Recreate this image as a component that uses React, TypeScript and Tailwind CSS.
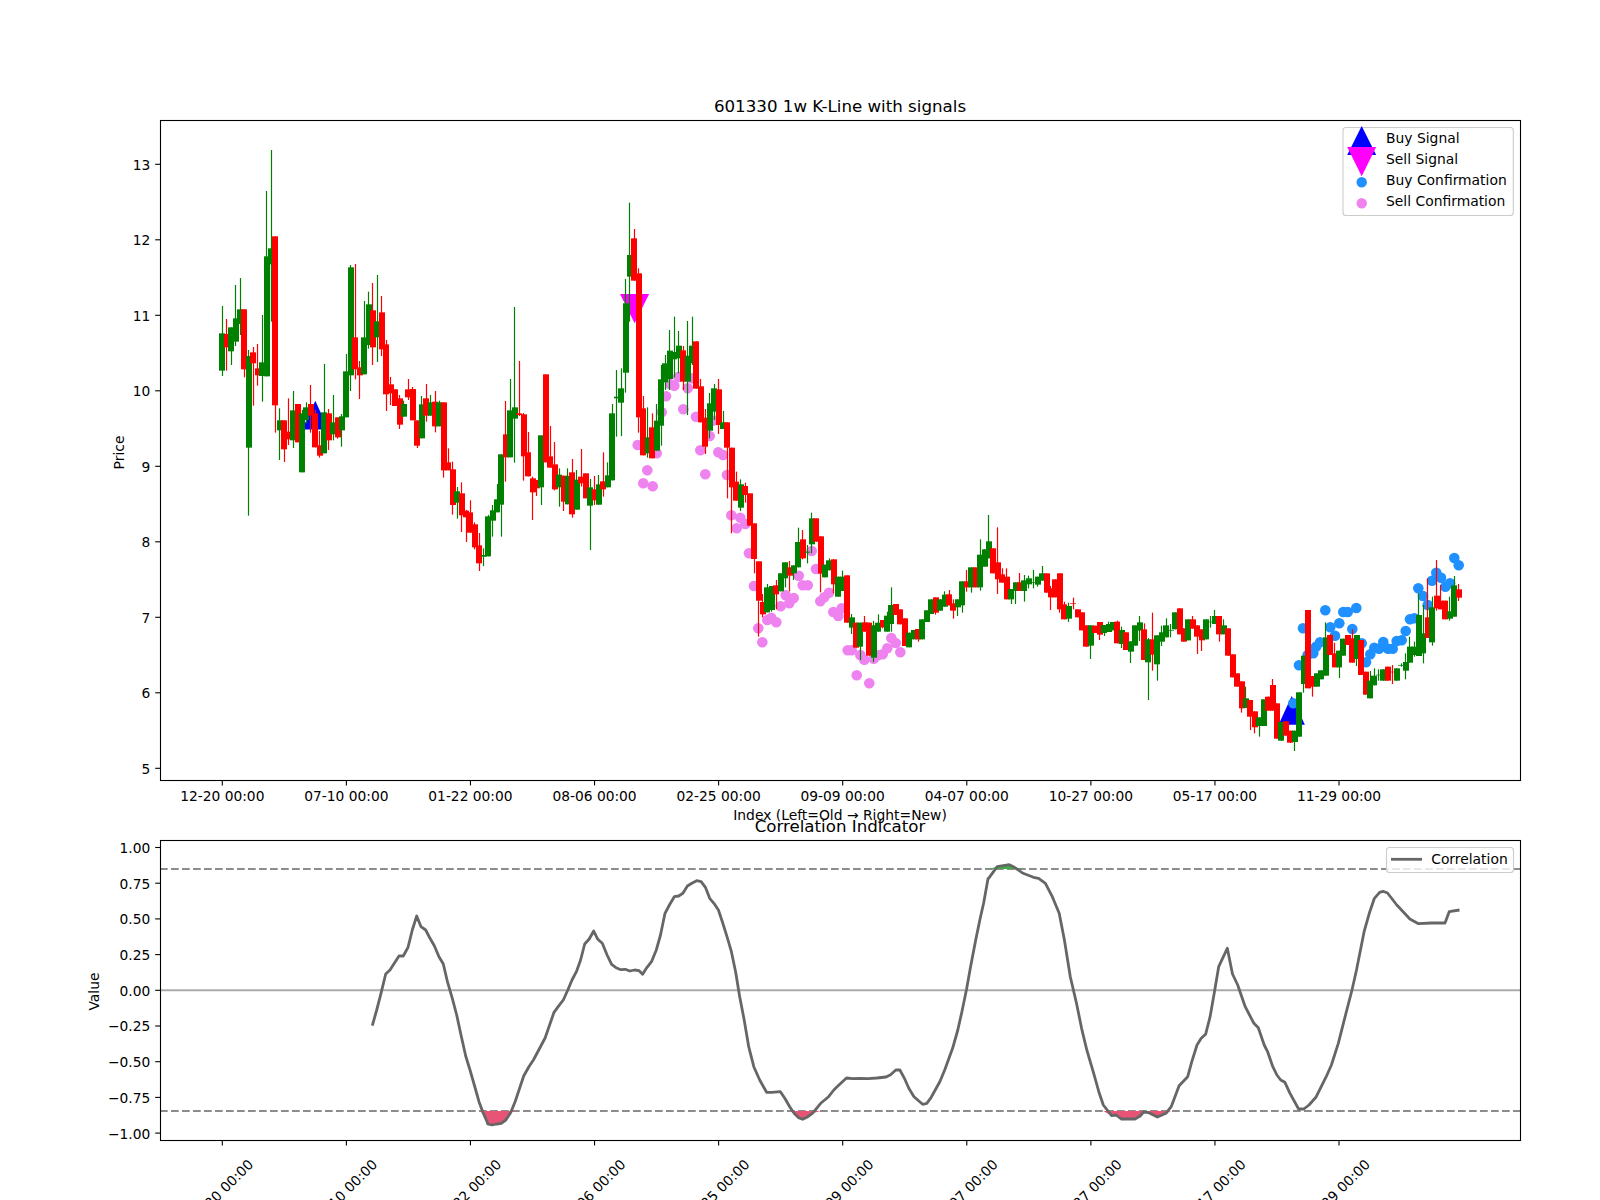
import React from "react";

type Candle = { up: boolean; top: number; bottom: number; high: number; low: number };
type Pt = [number, number];

// rows are "colour bodyTop bodyBottom wickTop wickBottom", read off 3x crops starting at baseY
function seg(baseY: number, rows: string): Candle[] {
  return rows
    .trim()
    .split(/\s*,\s*/)
    .map((row) => {
      const [c, a, b, d, e] = row.trim().split(/\s+/);
      return {
        up: c === "g",
        top: baseY + Number(a) / 3,
        bottom: baseY + Number(b) / 3,
        high: baseY + Number(d) / 3,
        low: baseY + Number(e) / 3,
      };
    });
}

const candles: Candle[] = [
  ...seg(100, `g 700 812 618 828, r 702 742 657 812, g 682 754 682 795, g 655 725 555 738, g 628 672 534 705,
    r 628 808 628 832, g 768 1043 750 1247, r 757 790 741 917, r 805 826 732 857, g 787 828 645 905,
    g 469 829 273 829, g 445 493 150 665, r 409 916 409 998`),
  ...seg(380, `g 121 151 85 240, r 121 208 121 246, r 155 178 55 195, g 91 181 33 204, r 72 187 72 187,
    g 100 277 90 277, g 82 120 67 130, r 72 107 15 158, r 100 202 90 202, r 196 227 153 233,
    g 97 220 -48 220, r 100 181 87 210, g 127 163 45 181, r 112 172 112 176, g 109 151 102 200,
    g -26 112 -78 112, g -338 -14 -345 33, r -128 -32 -348 -2, r -38 -14 -57 57, g -128 -17 -237 -17,
    g -227 -105 -265 -94, r -209 -98 -291 -45, g -176 -128 -315 -54, r -203 -92 -252 -72, r -107 43 -120 93,
    r 13 40 -9 75, r 28 78 28 78, r 55 134 45 147, g 72 110 62 110, r 28 52 -3 60,
    r 27 121 21 121, r 121 197 121 204, g 73 175 48 175, r 55 107 12 125, g 67 107 45 107,
    r 65 139 33 157, g 67 139 62 139, r 67 271 67 293, r 247 271 205 271, r 268 375 245 404,
    g 334 368 321 416, r 340 406 307 456, r 392 412 390 486, r 397 458 361 458, r 433 502 427 508,
    r 496 550 459 573, g 525 530 505 558, g 409 529 405 529, g 391 422 375 470, g 358 397 312 397,
    g 223 374 223 470, r 163 232 63 305, g 91 232 -3 232, g 82 116 -219 248, r 100 105 -57 108,
    r 103 229 99 302, r 217 289 156 289, r 295 337 290 420, r 300 325 300 348, g 166 322 166 375,
    r -17 247 -17 247, r 229 263 138 263, r 253 328 186 331, g 284 322 265 380, r 287 365 287 393,
    g 288 373 265 373`),
  ...seg(430, `r 127 253 87 263, g 149 239 120 239, r 140 160 57 170, r 130 205 130 205, g 172 227 147 360,
    r 178 211 138 225, g 163 224 135 224, r 154 178 67 200, g 136 172 97 172, g -50 151 -78 151`),
  ...seg(180, `g 650 655 570 770, g 625 668 565 768, g 370 578 297 638, g 225 290 68 425, r 175 302 147 302,
    r 280 712 265 758, r 685 826 648 826, g 772 820 682 833, r 742 835 700 835, g 722 812 672 812,
    g 598 737 555 797, g 550 607 525 630, g 512 597 450 630, g 516 538 410 592, g 497 535 453 580,
    r 511 605 498 630, g 527 605 423 705, g 497 550 410 555, r 484 626 484 626, r 619 727 597 727,
    r 713 800 687 822, g 670 752 639 775, g 625 695 612 720, r 628 735 597 762, g 727 747 693 747,
    r 727 803 727 955`),
  ...seg(430, `r 53 172 53 310, r 155 212 125 212, g 163 233 148 243, r 168 195 158 218, r 190 287 190 287,
    r 280 387 280 430`),
  ...seg(480, `r 244 362 244 470, r 366 403 342 412, g 322 397 312 397, g 318 390 318 395, r 316 343 300 388,
    g 280 334 280 334, g 247 295 247 322, r 262 287 243 334, g 256 280 256 300, g 186 262 143 262,
    r 178 235 150 238, g 215 218 195 250, g 115 193 98 220, r 115 185 115 185, r 169 281 169 337,
    g 254 292 254 292, g 241 271 235 271, r 238 313 238 340, g 290 350 290 350, g 290 333 272 333,
    r 286 428 286 428, g 412 443 402 462, r 428 503 428 503, g 428 500 428 540, r 427 455 408 455,
    r 428 527 428 527, g 436 533 423 546, g 428 455 403 455, r 420 442 420 445, g 407 455 395 455,
    g 375 432 322 455, r 372 405 372 405, r 388 433 388 433, r 415 498 415 498, g 458 502 458 502,
    g 450 478 450 478, r 447 478 447 485, g 418 478 418 478, g 391 426 391 426, g 358 402 358 402,
    r 352 398 352 404, g 358 392 358 392, g 344 380 334 380, r 343 376 330 376, r 370 392 358 416,
    g 358 382 358 408, g 304 376 304 398, r 304 322 270 335, g 262 322 262 338, r 262 322 262 322,
    g 224 322 178 332, g 208 260 208 260, g 184 235 105 235, r 205 280 205 280, r 247 298 142 342,
    r 283 308 265 308, r 290 358 265 358, g 327 358 327 372, g 307 333 307 372, r 307 333 279 333`),
  ...seg(560, `g 61 93 45 125, g 55 73 47 85, g 66 68 30 85, g 50 74 50 80, g 40 62 18 62,
    r 40 98 40 98, r 85 112 78 150, r 58 112 58 112, r 40 148 40 158, r 133 178 125 178,
    g 138 176 128 186, r 130 132 113 148, r 148 172 148 172, r 157 211 157 211, r 196 260 196 260,
    g 196 257 196 297, r 197 219 197 219, r 186 224 186 240, g 195 219 195 228, g 192 216 185 216,
    g 186 211 186 211, r 185 250 182 250, g 210 252 200 264, r 217 270 217 270, g 244 275 244 309,
    g 196 257 196 257, g 187 212 168 243, r 208 300 190 300, g 238 307 234 420, r 238 284 158 332,
    g 226 313 226 362, g 217 245 197 258, g 196 232 175 232, g 210 212 192 232, g 157 208 157 208,
    r 145 223 145 223, r 205 245 205 245, g 178 241 178 241, r 178 206 168 206, r 196 230 196 282,
    r 208 241 208 273, g 178 238 178 238, g 185 187 168 203, g 168 192 150 192, r 168 223 168 245,
    g 196 223 178 223, r 205 287 205 287, r 283 352 283 352, r 340 380 340 380`),
  ...seg(540, `r 424 505 424 518, g 475 504 440 504, r 480 530 480 570, r 514 562 514 580, g 532 558 532 590,
    g 478 558 478 558, r 470 512 470 512, r 435 512 417 512, r 490 596 490 596, g 546 602 546 602,
    r 544 587 544 587, r 572 608 572 608, g 572 606 572 633, g 457 590 457 590, g 347 432 347 458,
    r 210 445 210 445, r 408 440 408 470, g 400 440 400 440, g 391 418 391 418, g 292 407 247 407,
    r 285 345 282 345, r 340 382 308 382, g 332 382 332 414, g 296 347 296 347, r 285 315 285 315,
    r 295 368 268 368, g 285 357 285 378, r 300 405 300 405, r 395 464 395 464, g 422 475 393 475,
    g 407 436 385 436, g 404 406 388 422, g 388 422 388 422, r 380 422 380 422, r 395 397 375 432,
    g 385 422 385 422, g 375 377 370 380, g 366 392 340 418, g 320 368 290 368, g 320 345 305 350,
    g 225 348 160 348, g 280 340 195 370, r 232 294 115 294, g 202 307 170 317, r 167 205 60 212,
    r 182 208 135 208, r 182 238 182 238, g 214 236 170 242, g 136 230 108 230, r 148 173 132 183`),
];

const TICK0 = 222.3;
const CANDLE_STEP = 4.4315;
const TICK_STEP = 124.08;

const sellDots: Pt[] = [
  [637.7, 445], [656.7, 453.3], [647.3, 470.3], [643.3, 483.3], [652.7, 486.3], [666, 396.3], [661.7, 412.3],
  [674.3, 385.7], [670, 384], [678.3, 377], [687.7, 388.3], [691.7, 378.3], [683.3, 409.3], [696, 416.7],
  [713, 420.7], [709.7, 436], [700.3, 450.3], [718.3, 452.3], [723, 455], [705.3, 474.3], [727, 475],
  [731.3, 515.3], [740.3, 517.7], [745.3, 524], [736.7, 528.3], [749, 553.3], [754, 586], [758.3, 628.3],
  [762.3, 642.3], [767.3, 620], [771.3, 617.7], [776.3, 622.3], [780.7, 606.3], [785.7, 595.3], [789.3, 603.3],
  [793.7, 598], [798.7, 575.7], [802.7, 585.3], [807.7, 585.3], [811.7, 551], [816, 569], [820.3, 601.3],
  [824.3, 597.3], [829, 592.7], [833.3, 612], [838.3, 616], [841.7, 608.3], [847.7, 650.3], [851.7, 650.3],
  [856.7, 675.3], [860.3, 655], [864.3, 659.7], [869.3, 683.3], [873.7, 658.7], [878, 655.3], [882.7, 654.3],
  [887.3, 648.3], [891.3, 638], [895.7, 643], [900.3, 652.3],
];

const buyDots: Pt[] = [
  [1293.3, 703.3], [1299, 665.3], [1303, 628.3], [1307.7, 655], [1313.3, 653.3], [1316, 646.7], [1320, 642.3],
  [1325.3, 610.3], [1330.3, 627.3], [1335, 635.7], [1339.3, 623.3], [1343.3, 612], [1347.7, 612], [1352.3, 629],
  [1356.3, 608], [1361.7, 643.3], [1366, 662.3], [1370.3, 654.3], [1374.3, 647.7], [1379, 648.7], [1383.3, 642],
  [1388, 648.7], [1392.7, 648.7], [1396.7, 641], [1401.7, 640.3], [1405.7, 631], [1410, 619.3], [1414.3, 618.3],
  [1418.3, 588.3], [1423, 596], [1427.7, 605], [1432, 580.7], [1436.3, 572.7], [1441, 577.7], [1445.3, 586.7],
  [1450, 583.3], [1454.3, 558], [1458.7, 565.3],
];

function scale(x0: number, y0: number, sx: number, raw: number[][]): Pt[] {
  return raw.map(([x, y]) => [x0 + x / sx, y0 + y / 3] as Pt);
}

const corr: Pt[] = [
  ...scale(0, 760, 3, [
    [1117, 797], [1130, 750], [1143, 700], [1157, 642], [1170, 630], [1183, 610], [1197, 588], [1210, 588], [1224, 562],
    [1237, 510], [1250, 468], [1263, 500], [1277, 510], [1290, 535], [1303, 557], [1317, 590], [1330, 612], [1343, 668],
    [1357, 715], [1370, 765], [1383, 825], [1397, 888], [1410, 930], [1423, 975], [1437, 1025], [1450, 1060], [1463, 1090],
  ]),
  ...scale(460, 840, 2.903, [
    [80, 852], [93, 855], [107, 852], [120, 850], [133, 840], [147, 818], [160, 785], [173, 745], [185, 708], [200, 680],
    [213, 660], [227, 633], [247, 594], [260, 555], [273, 517], [287, 497], [300, 480], [313, 450], [325, 420], [338, 395],
    [350, 360], [362, 312], [375, 297], [388, 273], [400, 298], [413, 310], [427, 345], [440, 373], [453, 383], [467, 389],
    [480, 388], [493, 393], [507, 390], [520, 392], [530, 403], [543, 382], [556, 365], [570, 330], [582, 285], [595, 220],
    [608, 195], [622, 170], [635, 168], [647, 160], [660, 138], [673, 130], [687, 122], [700, 125], [713, 143], [725, 175],
    [737, 190], [750, 210], [762, 247], [775, 290], [788, 335], [800, 395], [812, 470], [825, 540], [838, 620], [853, 680],
    [870, 720], [890, 757], [905, 757], [930, 755], [943, 775], [957, 800], [970, 820], [983, 833], [995, 838], [1010, 830],
    [1023, 820], [1047, 790], [1070, 770], [1085, 750], [1100, 735], [1122, 714], [1140, 716], [1160, 715], [1185, 716],
    [1210, 714], [1237, 711], [1250, 704], [1265, 690], [1277, 690], [1290, 715], [1303, 745], [1318, 770], [1343, 793],
    [1355, 790], [1368, 772], [1393, 725], [1407, 690], [1430, 625], [1445, 570], [1457, 515], [1470, 450], [1483, 375],
    [1497, 300], [1510, 235], [1520, 190], [1533, 115],
  ]),
  ...scale(980, 820, 2.903, [
    [25, 175], [50, 140], [85, 134], [100, 142], [125, 160], [155, 172], [170, 175], [190, 190], [210, 230], [230, 280],
    [245, 360], [262, 470], [280, 550], [295, 625], [310, 690], [330, 760], [345, 815], [358, 855], [382, 887], [395, 885],
    [410, 897], [450, 897], [465, 888], [475, 876], [490, 878], [515, 891], [540, 880], [555, 860], [578, 797], [603, 770],
    [615, 725], [630, 675], [642, 655], [655, 643], [668, 590], [680, 520], [693, 440], [718, 385], [733, 462], [748, 495],
    [770, 560], [795, 610], [808, 623], [825, 675], [835, 695], [850, 740], [862, 765], [873, 780], [885, 787], [900, 820],
    [925, 867], [940, 867], [955, 855], [975, 832], [1005, 770], [1020, 735], [1040, 670], [1060, 590], [1080, 510],
    [1093, 450], [1115, 335], [1130, 280], [1145, 235], [1160, 217], [1170, 214], [1183, 219], [1210, 255], [1248, 297],
    [1273, 311], [1310, 309], [1350, 309], [1362, 275], [1392, 270],
  ]),
];

const toPoints = (pts: Pt[]) => pts.map(([x, y]) => `${x.toFixed(1)},${y.toFixed(1)}`).join(" ");

const priceTicks = [5, 6, 7, 8, 9, 10, 11, 12, 13];
const corrTicks = ["1.00", "0.75", "0.50", "0.25", "0.00", "−0.25", "−0.50", "−0.75", "−1.00"];
const dates = ["12-20", "07-10", "01-22", "08-06", "02-25", "09-09", "04-07", "10-27", "05-17", "11-29"];

function Up({ x, y, w = 26.3, h = 28.7 }: { x: number; y: number; w?: number; h?: number }) {
  return <polygon points={`${x},${y} ${x - w / 2},${y + h} ${x + w / 2},${y + h}`} fill="#0000ff" />;
}

function Down({ x, y }: { x: number; y: number }) {
  return <polygon points={`${x - 14.5},${y} ${x + 14.5},${y} ${x},${y + 29.3}`} fill="#ff00ff" />;
}

function PriceChart() {
  return (
    <svg width="1600" height="830" viewBox="0 0 1600 830" className="block">
      <text x="840" y="112" textAnchor="middle" fontSize="16.67">601330 1w K-Line with signals</text>

      <Up x={315.3} y={400.7} />
      <Down x={634.6} y={294} />
      <Up x={1291.7} y={696} />
      {sellDots.map(([x, y], i) => (
        <circle key={i} cx={x} cy={y} r="5.3" fill="#ee82ee" />
      ))}
      {buyDots.map(([x, y], i) => (
        <circle key={i} cx={x} cy={y} r="5.3" fill="#1e90ff" />
      ))}

      {candles.map((c, i) => {
        const x = TICK0 + i * CANDLE_STEP;
        const color = c.up ? "#008000" : "#ff0000";
        return (
          <g key={i}>
            <line x1={Math.floor(x) + 0.5} x2={Math.floor(x) + 0.5} y1={c.high} y2={c.low} stroke={color} strokeWidth="1.2" />
            <rect x={Math.round(x - 3)} y={c.top} width="6" height={c.bottom - c.top} fill={color} />
          </g>
        );
      })}

      <rect x="160.5" y="120.5" width="1360" height="660" fill="none" stroke="#000" strokeWidth="1.1" />

      {/* y axis */}
      {priceTicks.map((p) => {
        const y = 768.3 - (p - 5) * 75.5;
        return (
          <g key={p}>
            <line x1="155.2" x2="160" y1={y} y2={y} stroke="#000" strokeWidth="1.1" />
            <text x="150.3" y={y + 5.6} textAnchor="end" fontSize="13.8">{p}</text>
          </g>
        );
      })}
      <text transform="translate(124 452.5) rotate(-90)" textAnchor="middle" fontSize="13.89">Price</text>

      {/* x axis */}
      {dates.map((d, i) => {
        const x = TICK0 + i * TICK_STEP;
        return (
          <g key={d}>
            <line x1={x} x2={x} y1="781" y2="785.4" stroke="#000" strokeWidth="1.1" />
            <text x={x} y="801" textAnchor="middle" fontSize="13.8">{d} 00:00</text>
          </g>
        );
      })}
      <text x="840" y="820" textAnchor="middle" fontSize="13.89">Index (Left=Old → Right=New)</text>

      {/* legend */}
      <rect x="1343" y="127.5" width="170.3" height="88" rx="3" fill="#fff" fillOpacity="0.8" stroke="#cccccc" strokeWidth="1.1" />
      <Up x={1361.7} y={126} w={29} h={29} />
      <Down x={1361.7} y={147} />
      <circle cx="1361.7" cy="182.3" r="5.2" fill="#1e90ff" />
      <circle cx="1361.7" cy="203.3" r="5.2" fill="#ee82ee" />
      <g fontSize="13.89">
        <text x="1386" y="143.3">Buy Signal</text>
        <text x="1386" y="164.3">Sell Signal</text>
        <text x="1386" y="185.3">Buy Confirmation</text>
        <text x="1386" y="206.3">Sell Confirmation</text>
      </g>
    </svg>
  );
}

function CorrelationChart() {
  return (
    <svg width="1600" height="370" viewBox="0 830 1600 370" className="block overflow-visible">
      <text x="840" y="832" textAnchor="middle" fontSize="16.67">Correlation Indicator</text>

      <line x1="160" x2="1520" y1="990.3" y2="990.3" stroke="#ababab" strokeWidth="2" />
      <line x1="160" x2="1520" y1="869" y2="869" stroke="#8c8c8c" strokeWidth="2" strokeDasharray="7.7 3.3" />
      <line x1="160" x2="1520" y1="1111" y2="1111" stroke="#8c8c8c" strokeWidth="2" strokeDasharray="7.7 3.3" />

      <polygon points={toPoints(corr.map(([x, y]) => [x, Math.max(y, 1111)] as Pt))} fill="#e75476" />
      <polygon points={toPoints(corr.map(([x, y]) => [x, Math.min(y, 869)] as Pt))} fill="#3cb043" />
      <polyline points={toPoints(corr)} fill="none" stroke="#666666" strokeWidth="2.8" strokeLinejoin="round" />

      <rect x="160.5" y="840.5" width="1360" height="300" fill="none" stroke="#000" strokeWidth="1.1" />

      {corrTicks.map((label, i) => {
        const y = 847.5 + i * 35.7;
        return (
          <g key={label}>
            <line x1="155.2" x2="160" y1={y} y2={y} stroke="#000" strokeWidth="1.1" />
            <text x="150.3" y={y + 5.4} textAnchor="end" fontSize="13.8">{label}</text>
          </g>
        );
      })}
      <text transform="translate(99 991.5) rotate(-90)" textAnchor="middle" fontSize="13.89">Value</text>

      {dates.map((d, i) => {
        const x = TICK0 + i * TICK_STEP;
        return (
          <g key={d}>
            <line x1={x} x2={x} y1="1141" y2="1145.4" stroke="#000" strokeWidth="1.1" />
            <text transform={`translate(${x - 1.5} 1191.5) rotate(-45)`} y="5" textAnchor="middle" fontSize="13.8">{d} 00:00</text>
          </g>
        );
      })}

      {/* legend */}
      <rect x="1386.5" y="847.5" width="127" height="25" rx="3" fill="#fff" fillOpacity="0.8" stroke="#cccccc" strokeWidth="1.1" />
      <line x1="1391" x2="1422" y1="859.3" y2="859.3" stroke="#666666" strokeWidth="2.8" />
      <text x="1431.2" y="864.3" fontSize="13.89">Correlation</text>
    </svg>
  );
}

export default function App() {
  return (
    <div className="w-[1600px] h-[1200px] overflow-hidden bg-white text-black font-['DejaVu_Sans',sans-serif]">
      <PriceChart />
      <CorrelationChart />
    </div>
  );
}
